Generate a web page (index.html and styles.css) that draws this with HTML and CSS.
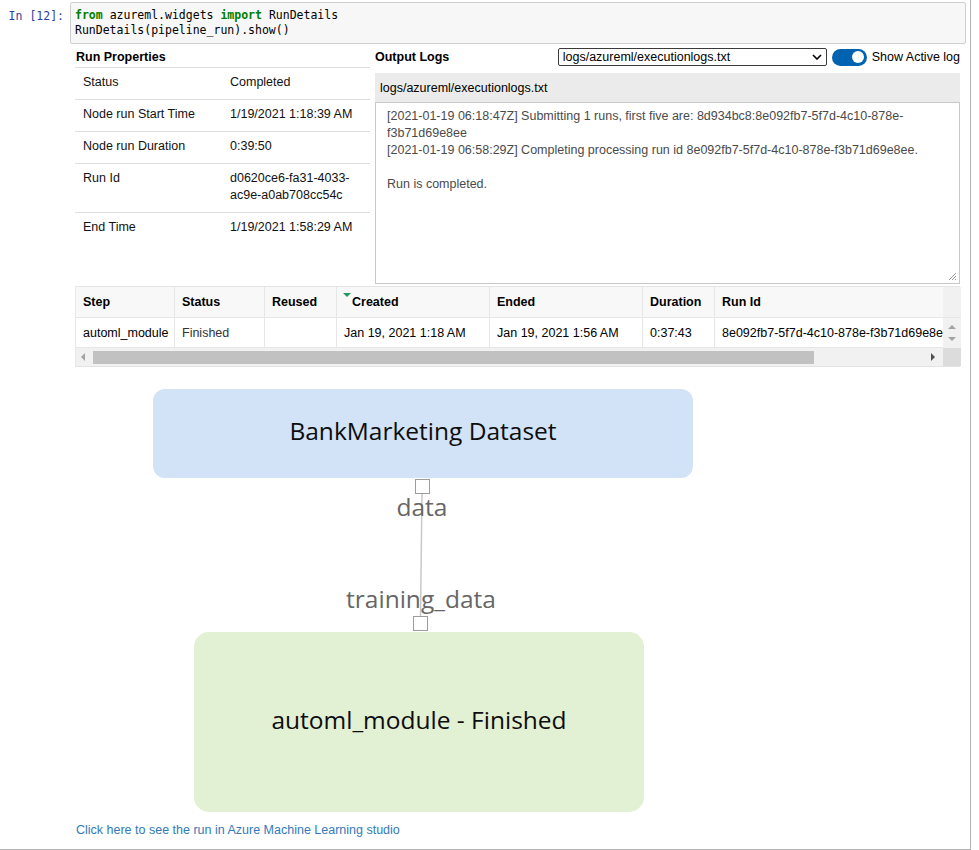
FILE: index.html
```html
<!DOCTYPE html>
<html>
<head>
<meta charset="utf-8">
<title>RunDetails</title>
<link rel="stylesheet" href="styles.css">
</head>
<body>
<div class="cell">
  <div class="prompt">In&nbsp;[12]:</div>
  <div class="main">
    <div class="input">
      <div class="code"><span class="kw">from</span> azureml.widgets <span class="kw">import</span> RunDetails</div>
      <div class="code">RunDetails(pipeline_run).show()</div>
    </div>
    <div class="output">
      <div class="top">
        <div class="props">
          <div class="sec-title props-title">Run Properties</div>
          <div class="prop-row"><div>Status</div><div>Completed</div></div>
          <div class="prop-row"><div>Node run Start Time</div><div>1/19/2021 1:18:39 AM</div></div>
          <div class="prop-row"><div>Node run Duration</div><div>0:39:50</div></div>
          <div class="prop-row"><div>Run Id</div><div>d0620ce6-fa31-4033-<br>ac9e-a0ab708cc54c</div></div>
          <div class="prop-row last"><div>End Time</div><div>1/19/2021 1:58:29 AM</div></div>
        </div>
        <div class="logs">
          <div class="logs-head">
            <div class="sec-title">Output Logs</div>
            <div class="controls">
              <div class="select"><span>logs/azureml/executionlogs.txt</span><svg class="chev" width="10" height="6" viewBox="0 0 10 6"><path d="M1 1 L5 5 L9 1" fill="none" stroke="#000" stroke-width="1.6"/></svg></div>
              <div class="toggle"><span class="knob"></span></div>
              <span class="toggle-label">Show Active log</span>
            </div>
          </div>
          <div class="log-file">logs/azureml/executionlogs.txt</div>
          <div class="log-box"><div class="log-text">[2021-01-19 06:18:47Z] Submitting 1 runs, first five are: 8d934bc8:8e092fb7-5f7d-4c10-878e-
f3b71d69e8ee
[2021-01-19 06:58:29Z] Completing processing run id 8e092fb7-5f7d-4c10-878e-f3b71d69e8ee.

Run is completed.</div><svg class="grip" width="9" height="9" viewBox="0 0 9 9"><path d="M8 1 L1 8 M8 4 L4 8 M8 7 L7 8" stroke="#9a9a9a" stroke-width="1"/></svg></div>
        </div>
      </div>

      <div class="steps">
        <div class="srow shead">
          <div class="sc">Step</div>
          <div class="sc">Status</div>
          <div class="sc">Reused</div>
          <div class="sc created"><span class="sort"></span>Created</div>
          <div class="sc">Ended</div>
          <div class="sc">Duration</div>
          <div class="sc">Run Id</div>
        </div>
        <div class="head-pad"></div>
        <div class="srow sbody">
          <div class="sc">automl_module</div>
          <div class="sc dim">Finished</div>
          <div class="sc"></div>
          <div class="sc">Jan 19, 2021 1:18 AM</div>
          <div class="sc">Jan 19, 2021 1:56 AM</div>
          <div class="sc">0:37:43</div>
          <div class="sc clip">8e092fb7-5f7d-4c10-878e-f3b71d69e8ee</div>
        </div>
        <div class="vscroll"><span class="arr up"></span><span class="arr down"></span></div>
        <div class="hscroll"><span class="arr left"></span><span class="thumb"></span><span class="arr right"></span></div>
        <div class="corner"></div>
      </div>

      <div class="diagram">
        <div class="node dataset">BankMarketing Dataset</div>
        <svg class="edge" width="885" height="455" viewBox="0 0 885 455"><line x1="347" y1="127" x2="345.5" y2="249" stroke="#c9c9c9" stroke-width="1.5"/></svg>
        <div class="port port-out"></div>
        <div class="elabel lab-data">data</div>
        <div class="elabel lab-train">training_data</div>
        <div class="port port-in"></div>
        <div class="node module">automl_module - Finished</div>
      </div>

      <a class="studio-link" href="#">Click here to see the run in Azure Machine Learning studio</a>
    </div>
  </div>
</div>
</body>
</html>
```

FILE: styles.css
```css
html, body {
  margin: 0;
  padding: 0;
  background: #fff;
}
body {
  font-family: "Liberation Sans", Arial, sans-serif;
  font-size: 12.5px;
  color: #000;
}
.cell {
  box-sizing: border-box;
  width: 971px;
  height: 850px;
  border-right: 1px solid #b4b4b4;
  border-bottom: 1px solid #b4b4b4;
  padding-top: 2px;
  display: flex;
}
.prompt {
  width: 70px;
  box-sizing: border-box;
  padding: 7px 6px 0 0;
  text-align: right;
  font-family: "DejaVu Sans Mono", "Liberation Mono", monospace;
  font-size: 11.5px;
  line-height: 15px;
  color: #303f9f;
  flex: none;
}
.main {
  flex: 1;
  min-width: 0;
  display: flex;
  flex-direction: column;
}
.input {
  margin-right: 4px;
  background: #f7f7f7;
  border: 1px solid #cfcfcf;
  border-radius: 2px;
  padding: 5px 4px;
}
.code {
  font-family: "DejaVu Sans Mono", "Liberation Mono", monospace;
  font-size: 11.5px;
  line-height: 15px;
  height: 15px;
  white-space: pre;
  color: #000;
}
.kw {
  color: #008000;
  font-weight: bold;
}
.output {
  margin-left: 5px;
  width: 885px;
  display: flex;
  flex-direction: column;
}
.top {
  display: flex;
  gap: 5px;
  margin-top: 3px;
}
.props {
  width: 295px;
  flex: none;
}
.sec-title {
  font-weight: bold;
  line-height: 20px;
}
.props-title {
  border-bottom: 1px solid #dedede;
  padding-left: 1px;
}
.prop-row {
  display: grid;
  grid-template-columns: 147px 1fr;
  padding: 6px 8px 8px;
  line-height: 17px;
  border-bottom: 1px solid #dedede;
  color: #111;
}
.prop-row.last {
  border-bottom: none;
}
.logs {
  width: 585px;
  flex: none;
}
.logs-head {
  display: flex;
  align-items: center;
  justify-content: space-between;
  height: 20px;
}
.controls {
  display: flex;
  align-items: center;
  gap: 5px;
}
.select {
  box-sizing: border-box;
  width: 269px;
  height: 18px;
  border: 1px solid #3a3a3a;
  border-radius: 2px;
  display: flex;
  align-items: center;
  justify-content: space-between;
  padding: 0 4px 0 4px;
  line-height: 16px;
}
.chev {
  display: block;
}
.toggle {
  box-sizing: border-box;
  width: 35px;
  height: 17px;
  border-radius: 9px;
  background: #0063b1;
  display: flex;
  align-items: center;
  justify-content: flex-end;
  padding-right: 3px;
}
.knob {
  width: 12px;
  height: 12px;
  border-radius: 50%;
  background: #fff;
}
.toggle-label {
  white-space: nowrap;
  line-height: 17px;
}
.log-file {
  margin-top: 6px;
  background: #ebebeb;
  padding: 7px 5px 5px;
  line-height: 17px;
}
.log-box {
  position: relative;
  box-sizing: border-box;
  height: 182px;
  border: 1px solid #c8c8c8;
  padding: 5px 11px;
}
.log-text {
  white-space: pre;
  line-height: 17px;
  color: #4a4a4a;
}
.grip {
  position: absolute;
  right: 2px;
  bottom: 2px;
}
.steps {
  margin-top: 2px;
  display: grid;
  grid-template-columns: 867px 18px;
  grid-template-rows: 31px 30px 18px;
  border-top: 1px solid #e4e4e4;
  border-bottom: 1px solid #e4e4e4;
  border-left: 1px solid #e8e8e8;
  box-sizing: border-box;
  width: 885px;
}
.srow {
  display: grid;
  grid-template-columns: 99px 90px 72px 153px 153px 72px 228px;
  border-bottom: 1px solid #e6e6e6;
  min-width: 0;
  overflow: hidden;
}
.shead {
  background: #f8f8f8;
  font-weight: bold;
}
.sbody {
  background: #fff;
}
.sc {
  border-right: 1px solid #e6e6e6;
  padding: 0 7px;
  display: flex;
  align-items: center;
  white-space: nowrap;
  overflow: hidden;
}
.sc:last-child {
  border-right: none;
}
.sc.dim {
  color: #333;
}
.sc.created {
  padding-left: 6px;
}
.sort {
  width: 0;
  height: 0;
  border-left: 4px solid transparent;
  border-right: 4px solid transparent;
  border-top: 4px solid #1f9a5c;
  align-self: flex-start;
  margin-top: 6px;
  margin-right: 1px;
}
.clip {
  padding-right: 0;
}
.head-pad {
  background: #f1f1f1;
  border-bottom: 1px solid #e6e6e6;
}
.vscroll {
  background: #f1f1f1;
  display: flex;
  flex-direction: column;
  align-items: center;
  padding-top: 7px;
  gap: 8px;
}
.arr {
  width: 0;
  height: 0;
  display: block;
}
.arr.up {
  border-left: 4px solid transparent;
  border-right: 4px solid transparent;
  border-bottom: 4px solid #a3a3a3;
}
.arr.down {
  border-left: 4px solid transparent;
  border-right: 4px solid transparent;
  border-top: 4px solid #a3a3a3;
}
.hscroll {
  background: #f1f1f1;
  display: flex;
  align-items: center;
  padding-left: 5px;
}
.arr.left {
  border-top: 4px solid transparent;
  border-bottom: 4px solid transparent;
  border-right: 4px solid #a3a3a3;
}
.arr.right {
  border-top: 4px solid transparent;
  border-bottom: 4px solid transparent;
  border-left: 4px solid #505050;
  margin-left: 117px;
}
.thumb {
  width: 721px;
  height: 13px;
  background: #c1c1c1;
  margin-left: 8px;
}
.corner {
  background: #dcdcdc;
}
.diagram {
  position: relative;
  height: 455px;
  font-family: "Open Sans", "Noto Sans", sans-serif;
}
.node {
  position: absolute;
  display: flex;
  align-items: center;
  justify-content: center;
  font-size: 24.5px;
  color: #0d0d0d;
}
.dataset {
  left: 78px;
  top: 22px;
  width: 540px;
  height: 89px;
  background: #d2e2f7;
  border-radius: 12px;
  padding-bottom: 6px;
  box-sizing: border-box;
}
.module {
  left: 119px;
  top: 265px;
  width: 450px;
  height: 180px;
  background: #e2f0d4;
  border-radius: 15px;
  padding-bottom: 6px;
  box-sizing: border-box;
}
.edge {
  position: absolute;
  left: 0;
  top: 0;
}
.port {
  position: absolute;
  box-sizing: border-box;
  width: 15px;
  height: 15px;
  background: #fff;
  border: 1.5px solid #9c9c9c;
}
.port-out {
  left: 340px;
  top: 112px;
}
.port-in {
  left: 338px;
  top: 249px;
}
.elabel {
  position: absolute;
  width: 200px;
  text-align: center;
  font-size: 24.5px;
  line-height: 28px;
  color: #666;
}
.lab-data {
  left: 247px;
  top: 126px;
}
.lab-train {
  left: 246px;
  top: 218px;
}
.studio-link {
  display: block;
  margin-left: 1px;
  line-height: 17px;
  color: #337ab7;
  text-decoration: none;
}
```
